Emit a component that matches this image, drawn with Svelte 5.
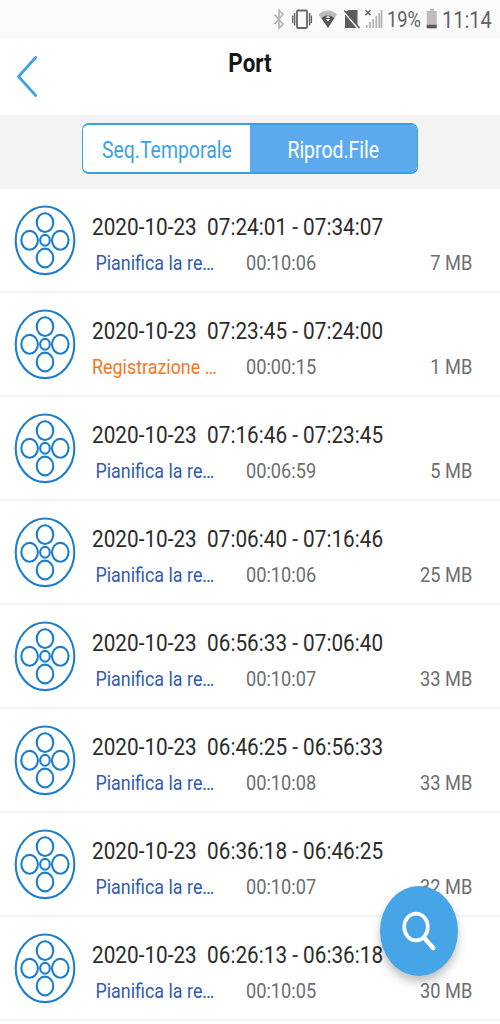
<script lang="ts">
    interface Recording {
        start: string;
        end: string;
        duration: string;
        size: string;
        alarm?: boolean;
    }

    const date = "2020-10-23";

    const recordings: Recording[] = [
        { start: "07:24:01", end: "07:34:07", duration: "00:10:06", size: "7 MB" },
        { start: "07:23:45", end: "07:24:00", duration: "00:00:15", size: "1 MB", alarm: true },
        { start: "07:16:46", end: "07:23:45", duration: "00:06:59", size: "5 MB" },
        { start: "07:06:40", end: "07:16:46", duration: "00:10:06", size: "25 MB" },
        { start: "06:56:33", end: "07:06:40", duration: "00:10:07", size: "33 MB" },
        { start: "06:46:25", end: "06:56:33", duration: "00:10:08", size: "33 MB" },
        { start: "06:36:18", end: "06:46:25", duration: "00:10:07", size: "32 MB" },
        { start: "06:26:13", end: "06:36:18", duration: "00:10:05", size: "30 MB" },
    ];

    let tab = $state("file");
</script>

<div class="screen">
    <div class="status">
        <svg class="icons" width="128" height="38" viewBox="260 0 128 38">
            <path d="M274.5 14.5L283 24.3L279 28.2V10.3L283 14.2L274.5 24" fill="none" stroke="#b5b5b5" stroke-width="1.7" />
            <g fill="none" stroke="#656565">
                <rect x="297" y="10.5" width="10" height="17.5" rx="1" stroke-width="1.8" />
                <path d="M294.6 13v12.5M309.6 13v12.5" stroke-width="1.5" />
                <path d="M292.7 15.5v7.5M311.4 15.5v7.5" stroke-width="1.3" />
            </g>
            <path d="M318.5 14.5Q328 6.5 337 14.5L328 28z" fill="#bcbcbc" />
            <path d="M321.5 18Q328 12.3 334.3 18L328 28z" fill="#565656" />
            <path d="M328 15.2l-2.3 2.6h4.6zM328 21.6l-2.3-2.6h4.6z" fill="#eee" />
            <path d="M349 10h8.5v15.5L345.5 11.8zM345 14.5L356.5 28H345z" fill="#5d5d5d" />
            <path d="M344.3 10.5L359.5 28" stroke="#5d5d5d" stroke-width="1.5" />
            <path d="M365.5 10.2l5 5M370.5 10.2l-5 5" stroke="#5d5d5d" stroke-width="1.4" />
            <path d="M366.8 28v-3M370 28v-6M373.2 28v-9M376.3 28v-12M379.2 28v-15M381.5 28V10" stroke="#b4b4b4" stroke-width="1.8" />
        </svg>
        <span class="percent">19%</span>
        <svg class="battery" width="12" height="20" viewBox="0 0 12 20">
            <path d="M4 0h4v2h2.7v17.5H.7V2H4z" fill="#bdbdbd" />
            <path d="M.7 15.7h10v2.8q0 .7-.7.7H1.4q-.7 0-.7-.7z" fill="#5d5d5d" />
        </svg>
        <span class="clock">11:14</span>
    </div>

    <header>
        <svg class="back" width="24" height="44" viewBox="0 0 24 44">
            <path d="M20.7 2.5L3.5 21.5L20.7 40.5" fill="none" stroke="#3ca3e4" stroke-width="2.8" stroke-linecap="round" />
        </svg>
        <h1>Port</h1>
    </header>

    <div class="tabs-bar">
        <div class="tabs">
            <button class:active={tab === "time"} onclick={() => (tab = "time")}><span>Seq.Temporale</span></button>
            <button class:active={tab === "file"} onclick={() => (tab = "file")}><span>Riprod.File</span></button>
        </div>
    </div>

    <ul>
        {#each recordings as rec}
            <li>
                <svg class="reel" width="64" height="74" viewBox="0 0 64 74" fill="none" stroke="#1b7ecb" stroke-width="2.1">
                    <ellipse cx="32" cy="37.3" rx="29.3" ry="33.8" />
                    <ellipse cx="32" cy="19.6" rx="8.3" ry="9.4" />
                    <ellipse cx="32" cy="55" rx="8.3" ry="9.4" />
                    <ellipse cx="16.6" cy="37.3" rx="8.3" ry="9.4" />
                    <ellipse cx="47.3" cy="37.3" rx="8.3" ry="9.4" />
                    <ellipse cx="32" cy="37.3" rx="4.8" ry="5.4" />
                </svg>
                <div class="info">
                    <div class="range">{date}{"  "}{rec.start} - {rec.end}</div>
                    <div class="details">
                        <span class="kind" class:alarm={rec.alarm}>{rec.alarm ? "Registrazione …" : "Pianifica la re…"}</span>
                        <span class="duration">{rec.duration}</span>
                        <span class="size">{rec.size}</span>
                    </div>
                </div>
            </li>
        {/each}
    </ul>

    <button class="search" aria-label="Cerca">
        <svg width="78" height="90" viewBox="0 0 78 90" fill="none" stroke="#fff">
            <ellipse cx="36" cy="41" rx="11.8" ry="13.4" stroke-width="3.7" />
            <path d="M43.8 51.5L53.2 62" stroke-width="4.4" stroke-linecap="round" />
        </svg>
    </button>
</div>

<style>
    :global(body) {
        margin: 0;
        background: #fff;
    }

    .screen {
        position: relative;
        width: 500px;
        height: 1024px;
        overflow: hidden;
        background: #fff;
        font-family: Roboto, sans-serif;
    }

    .status {
        display: flex;
        height: 38px;
        padding-left: 260px;
        background: #fafafa;
        color: #636363;
        white-space: nowrap;
    }

    .icons,
    .battery {
        flex: none;
    }

    .percent,
    .clock {
        font-size: 21.5px;
        line-height: 40px;
        transform: scaleX(0.85);
        transform-origin: left;
    }

    .percent {
        width: 38px;
        margin-left: -1px;
    }

    .battery {
        margin: 9px 4px 0 1px;
    }

    .clock {
        font-size: 23.5px;
        line-height: 41px;
    }

    header {
        display: grid;
        grid-template-columns: 60px 1fr 60px;
        height: 77px;
    }

    .back {
        margin: 17px 0 0 15px;
    }

    h1 {
        margin: 8px 0 0;
        color: #161616;
        font-size: 25.5px;
        font-weight: 700;
        line-height: 34px;
        text-align: center;
        transform: scaleX(0.88);
    }

    .tabs-bar {
        height: 74px;
        background: #f3f3f3;
        display: flex;
        justify-content: center;
    }

    .tabs {
        box-sizing: border-box;
        display: flex;
        width: 336px;
        height: 51px;
        margin-top: 8.4px;
        border: solid #36a0e6;
        border-width: 2px 1px;
        border-radius: 7px;
        overflow: hidden;
        background: #fff;
    }

    .tabs button {
        flex: 1;
        padding: 3px 0 0;
        border: 0;
        background: #fff;
        color: #3ba2e5;
        font: 23px/46px Roboto, sans-serif;
    }

    .tabs button.active {
        background: #5caaed;
        color: #fff;
    }

    .tabs span {
        display: inline-block;
        transform: scaleX(0.845);
    }

    ul {
        margin: 0;
        padding: 0;
        list-style: none;
    }

    li {
        box-sizing: border-box;
        display: flex;
        height: 104px;
        border-bottom: 2px solid #f3f3f3;
    }

    .reel {
        flex: none;
        margin: 14px 15px 0 12.7px;
    }

    .info {
        flex: 1;
        padding-top: 23px;
    }

    .range {
        color: #2c2c2c;
        font-size: 24.3px;
        line-height: 30px;
        white-space: pre;
        transform: scaleX(0.854);
        transform-origin: left;
    }

    .details {
        display: grid;
        grid-template-columns: 154px 100px 1fr;
        margin-top: 6.6px;
        padding-right: 28px;
        color: #6d6d6d;
        font-size: 21px;
        line-height: 28px;
        white-space: nowrap;
    }

    .details span {
        transform: scaleX(0.867);
        transform-origin: left;
    }

    .details .kind {
        padding-left: 4px;
        color: #315bad;
        transform: scaleX(0.852);
    }

    .details .kind.alarm {
        padding-left: 0;
        color: #f9751d;
    }

    .details .size {
        text-align: right;
        transform-origin: right;
    }

    .search {
        position: absolute;
        top: 886px;
        left: 380.4px;
        width: 78px;
        height: 90px;
        padding: 0;
        border: 0;
        border-radius: 50%;
        background: #45a5e6;
        box-shadow: 0 6px 10px rgba(0, 0, 0, 0.25);
    }

    .search svg {
        display: block;
    }
</style>
